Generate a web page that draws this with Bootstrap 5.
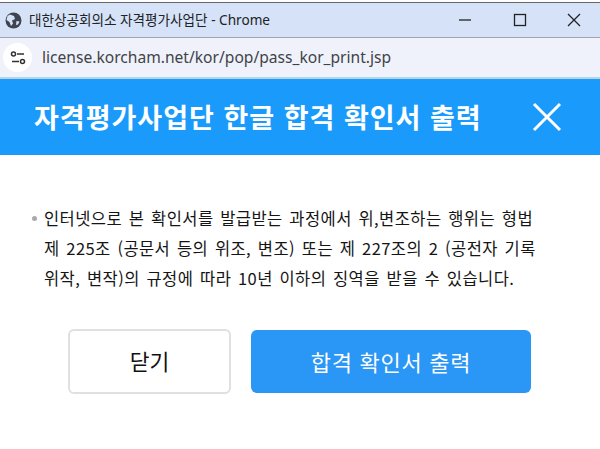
<!DOCTYPE html>
<html lang="ko"><head><meta charset="utf-8">
<link href="https://cdn.jsdelivr.net/npm/bootstrap@5.3.0/dist/css/bootstrap.min.css" rel="stylesheet">
<style>
html,body{height:100%;overflow:hidden;background:#fff}
body{font-family:"Liberation Sans","Noto Sans CJK KR",sans-serif;color:#111}
.topedge{height:3px;background:#fff;border-bottom:1px solid #666}
.titlebar{height:35px;background:#d5e2f8;border-bottom:1px solid #9fa3ab;padding-left:4px;color:#222}
.titlebar svg{flex:none}
.titletext{margin-left:6px;font-family:"Noto Sans","Noto Sans CJK KR",sans-serif;font-size:13.6px}
.winbtn{width:52px;justify-content:center;margin-left:2.5px}
.addrbar{height:41px;background:#eff2fb;padding-left:3px;border-bottom:2px solid #b5d5e2}
.sitechip{width:29px;height:29px;border-radius:50%;background:#fff;flex:none}
.urltext{margin-left:10px;font-family:"Noto Sans",sans-serif;font-size:15.6px;color:#3f4347}
.modalhead{height:76px;background:#1a9bfc;padding:0 38px 0 34px}
.headtitle{font-size:27px;font-weight:700;color:#fff;margin:0;letter-spacing:1px;font-family:"Noto Sans CJK KR",sans-serif}
.modalmain{padding:48px 30px 0 32px}
.noticeline{font-size:16.5px;line-height:30px;margin:0;font-family:"Noto Sans CJK KR",sans-serif;color:#151515;white-space:nowrap;letter-spacing:.42px;word-spacing:1.700px}
.dotmark{width:5px;height:5px;border-radius:50%;background:#aaa;margin:13px 7px 0 0;flex:none}
.actions{margin:36px 0 0 36px;gap:20px}
.btnclose{width:163px;height:65px;font-size:21.500px;color:#111;background:#fff;border:2px solid #e0e0e0;border-radius:6px;font-family:"Noto Sans CJK KR",sans-serif}
.btnprint{width:280px;height:63px;margin-top:1px;font-size:22px;letter-spacing:.7px;color:#fff;background:#2a96f6;border:0;border-radius:6px;font-family:"Noto Sans CJK KR",sans-serif}
</style></head>
<body>
<div class="topedge"></div>
<div class="titlebar d-flex align-items-center">
  <svg width="19" height="19" viewBox="0 0 19 19"><circle cx="9.5" cy="9.5" r="8" fill="#3f4550"/><path d="M6 3.5l4 1.5 1 3-3 1.5 1 3-2 2.5-1.500-4-3-2 1-4zM12.500 10l3 .5-1.500 3-2 .5z" fill="#d5e2f8"/></svg>
  <span class="titletext flex-grow-1">대한상공회의소 자격평가사업단 - Chrome</span>
  <span class="winbtn d-flex"><svg width="14" height="14" viewBox="0 0 14 14"><path d="M1 7h12" stroke="#222" stroke-width="1.300"/></svg></span>
  <span class="winbtn d-flex"><svg width="14" height="14" viewBox="0 0 14 14"><rect x="1.500" y="1.500" width="11" height="11" fill="none" stroke="#222" stroke-width="1.300"/></svg></span>
  <span class="winbtn d-flex"><svg width="14" height="14" viewBox="0 0 14 14"><path d="M1 1l12 12M13 1L1 13" stroke="#222" stroke-width="1.300"/></svg></span>
</div>
<div class="addrbar d-flex align-items-center">
  <span class="sitechip d-flex align-items-center justify-content-center"><svg width="16" height="14" viewBox="0 0 16 14"><circle cx="3.500" cy="3" r="2" fill="none" stroke="#333" stroke-width="1.500"/><path d="M7 3h7M2 10.500h7" stroke="#333" stroke-width="1.500"/><circle cx="12.500" cy="10.500" r="2" fill="none" stroke="#333" stroke-width="1.500"/></svg></span>
  <span class="urltext">license.korcham.net/kor/pop/pass_kor_print.jsp</span>
</div>
<div class="modalhead d-flex align-items-center justify-content-between">
  <h1 class="headtitle">자격평가사업단 한글 합격 확인서 출력</h1>
  <svg width="30" height="30" viewBox="0 0 30 30"><path d="M2 2l26 26M28 2L2 28" stroke="#fff" stroke-width="3"/></svg>
</div>
<div class="modalmain">
  <div class="d-flex">
    <span class="dotmark"></span>
    <p class="noticeline">인터넷으로 본 확인서를 발급받는 과정에서 위,변조하는 행위는 형법<br>제 225조 (공문서 등의 위조, 변조) 또는 제 227조의 2 (공전자 기록<br>위작, 변작)의 규정에 따라 10년 이하의 징역을 받을 수 있습니다.</p>
  </div>
  <div class="actions d-flex align-items-start">
    <button type="button" class="btn btnclose p-0">닫기</button>
    <button type="button" class="btn btnprint p-0">합격 확인서 출력</button>
  </div>
</div>
<script src="https://cdn.jsdelivr.net/npm/bootstrap@5.3.0/dist/js/bootstrap.bundle.min.js"></script>
</body></html>
